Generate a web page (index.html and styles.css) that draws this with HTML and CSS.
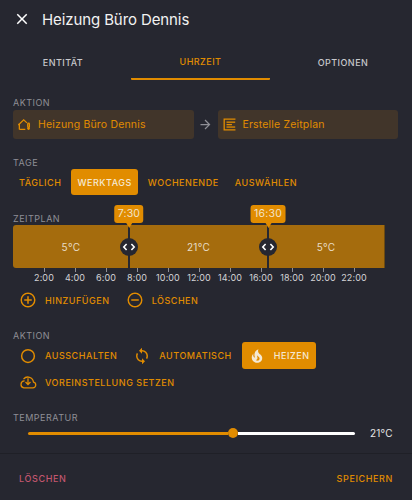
FILE: index.html
```html
<!DOCTYPE html>
<html lang="de">
<head>
    <meta charset="UTF-8">
    <meta name="viewport" content="width=device-width, initial-scale=1.0">
    <title>Heizung Büro Dennis</title>
    <link rel="stylesheet" href="styles.css">
</head>
<body>
    <div class="header">
        <svg class="close-icon" viewBox="0 0 24 24"><path d="M19,6.41L17.59,5L12,10.59L6.41,5L5,6.41L10.59,12L5,17.59L6.41,19L12,13.41L17.59,19L19,17.59L13.41,12L19,6.41Z"/></svg>
        <h1>Heizung Büro Dennis</h1>
    </div>

    <div class="tabs">
        <div class="tab tab-left">ENTITÄT</div>
        <div class="tab tab-active">UHRZEIT</div>
        <div class="tab tab-right">OPTIONEN</div>
    </div>

    <div class="content">
        <div class="label label-tight">AKTION</div>
        <div class="path-row">
            <div class="path-box">
                <svg class="icon-small" viewBox="0 0 24 24" fill="none" stroke="currentColor" stroke-width="2.4"><path d="M2.5 21V11L10.5 3.5L16.5 9M2.5 21H13.5"/><path d="M2.5 11L0.5 13"/><rect x="18" y="9.5" width="3" height="8" rx="1.5"/><circle cx="19.5" cy="19.5" r="2.5" fill="currentColor" stroke="none"/></svg>
                <span>Heizung Büro Dennis</span>
            </div>
            <svg class="path-arrow" viewBox="0 0 24 24"><path d="M4,11V13H16L10.5,18.5L11.92,19.92L19.84,12L11.92,4.08L10.5,5.5L16,11H4Z"/></svg>
            <div class="path-box">
                <svg class="icon-small" viewBox="0 0 24 24" fill="currentColor"><path d="M1 1H23V3.4H3.4V20.6H23V23H1Z"/><rect x="6.5" y="6.5" width="16" height="2.4"/><rect x="6.5" y="11" width="10" height="2.4"/><rect x="6.5" y="15.5" width="16" height="2.4"/></svg>
                <span>Erstelle Zeitplan</span>
            </div>
        </div>

        <div class="label">TAGE</div>
        <div class="btn-row">
            <div class="btn">TÄGLICH</div>
            <div class="btn btn-active">WERKTAGS</div>
            <div class="btn">WOCHENENDE</div>
            <div class="btn">AUSWÄHLEN</div>
        </div>

        <div class="label">ZEITPLAN</div>
        <div class="chart">
            <div class="slot slot-a">5°C</div>
            <div class="slot slot-b">21°C</div>
            <div class="slot slot-c">5°C</div>

            <div class="marker marker-a">
                <div class="tip">7:30</div>
                <div class="handle">
                    <svg viewBox="0 0 18 18" fill="none" stroke="#fff" stroke-width="1.6"><path d="M6.6 6L3.8 9L6.6 12M11.4 6L14.2 9L11.4 12"/></svg>
                </div>
            </div>
            <div class="marker marker-b">
                <div class="tip">16:30</div>
                <div class="handle">
                    <svg viewBox="0 0 18 18" fill="none" stroke="#fff" stroke-width="1.6"><path d="M6.6 6L3.8 9L6.6 12M11.4 6L14.2 9L11.4 12"/></svg>
                </div>
            </div>
        </div>
        <div class="ticks">
            <div class="tick">2:00</div>
            <div class="tick">4:00</div>
            <div class="tick">6:00</div>
            <div class="tick">8:00</div>
            <div class="tick">10:00</div>
            <div class="tick">12:00</div>
            <div class="tick">14:00</div>
            <div class="tick">16:00</div>
            <div class="tick">18:00</div>
            <div class="tick">20:00</div>
            <div class="tick">22:00</div>
        </div>

        <div class="btn-row btn-row-edit">
            <div class="btn btn-icon">
                <svg class="icon" viewBox="0 0 24 24" fill="currentColor"><path d="M12,20C7.59,20 4,16.41 4,12C4,7.59 7.59,4 12,4C16.41,4 20,7.59 20,12C20,16.41 16.41,20 12,20M12,2A10,10 0 0,0 2,12A10,10 0 0,0 12,22A10,10 0 0,0 22,12A10,10 0 0,0 12,2M13,7H11V11H7V13H11V17H13V13H17V11H13V7Z"/></svg>
                HINZUFÜGEN
            </div>
            <div class="btn btn-icon">
                <svg class="icon" viewBox="0 0 24 24" fill="currentColor"><path d="M12,20C7.59,20 4,16.41 4,12C4,7.59 7.59,4 12,4C16.41,4 20,7.59 20,12C20,16.41 16.41,20 12,20M12,2A10,10 0 0,0 2,12A10,10 0 0,0 12,22A10,10 0 0,0 22,12A10,10 0 0,0 12,2M7,13H17V11H7"/></svg>
                LÖSCHEN
            </div>
        </div>

        <div class="label label-tight">AKTION</div>
        <div class="btn-row btn-row-action">
            <div class="btn btn-icon">
                <svg class="icon" viewBox="0 0 24 24" fill="none" stroke="currentColor" stroke-width="2"><circle cx="12" cy="12" r="8.5"/></svg>
                AUSSCHALTEN
            </div>
            <div class="btn btn-icon">
                <svg class="icon" viewBox="0 0 24 24" fill="currentColor"><path d="M12,18A6,6 0 0,1 6,12C6,11 6.25,10.03 6.7,9.2L5.24,7.74C4.46,8.97 4,10.43 4,12A8,8 0 0,0 12,20V23L16,19L12,15M12,4V1L8,5L12,9V6A6,6 0 0,1 18,12C18,13 17.75,13.97 17.3,14.8L18.76,16.26C19.54,15.03 20,13.57 20,12A8,8 0 0,0 12,4Z"/></svg>
                AUTOMATISCH
            </div>
            <div class="btn btn-icon btn-active">
                <svg class="icon" viewBox="0 0 24 24" fill="currentColor"><path d="M17.66 11.2C17.43 10.9 17.15 10.64 16.89 10.38C16.22 9.78 15.46 9.35 14.82 8.72C13.33 7.26 13 4.85 13.95 3C13 3.23 12.17 3.75 11.46 4.32C8.87 6.4 7.85 10.07 9.07 13.22C9.11 13.32 9.15 13.42 9.15 13.55C9.15 13.77 9 13.97 8.8 14.05C8.57 14.15 8.33 14.09 8.14 13.93C8.08 13.88 8.04 13.83 8 13.76C6.87 12.33 6.69 10.28 7.45 8.64C5.78 10 4.87 12.3 5 14.47C5.06 14.97 5.12 15.47 5.29 15.97C5.43 16.57 5.7 17.17 6 17.7C7.08 19.43 8.95 20.67 10.96 20.92C13.1 21.19 15.39 20.8 17.03 19.32C18.86 17.66 19.5 15 18.56 12.72L18.43 12.46C18.28 12.13 17.66 11.2 17.66 11.2M14.5 17.5C14.22 17.74 13.76 18 13.4 18.1C12.28 18.5 11.16 17.94 10.5 17.28C11.69 17 12.4 16.12 12.61 15.23C12.78 14.43 12.46 13.77 12.33 13C12.21 12.26 12.23 11.63 12.5 10.94C12.69 11.32 12.89 11.7 13.13 12C13.9 13 15.11 13.44 15.37 14.8C15.41 14.94 15.43 15.08 15.43 15.23C15.46 16.05 15.1 16.95 14.5 17.5H14.5Z"/></svg>
                HEIZEN
            </div>
        </div>
        <div class="btn-row btn-row-preset">
            <div class="btn btn-icon">
                <svg class="icon" viewBox="0 0 24 24" fill="none" stroke="currentColor" stroke-width="1.7"><path d="M7.5 10.5H7A4.7 4.7 0 0 0 6.5 19.8H18.5A3.9 3.9 0 0 0 19.3 12.1A7.5 7.5 0 0 0 6 8.2"/><path d="M12 7V15M8.7 12L12 15.3L15.3 12"/></svg>
                VOREINSTELLUNG SETZEN
            </div>
        </div>

        <div class="label label-tight">TEMPERATUR</div>
        <div class="slider-row">
            <div class="slider">
                <div class="slider-fill"></div>
                <div class="slider-thumb"></div>
                <div class="slider-rest"></div>
            </div>
            <div class="slider-value">21°C</div>
        </div>
    </div>

    <div class="footer">
        <div class="footer-btn footer-delete">LÖSCHEN</div>
        <div class="footer-btn footer-save">SPEICHERN</div>
    </div>
</body>
</html>
```

FILE: styles.css
```css
body {
    font-family: Inter, "Liberation Sans", sans-serif;
    background-color: #262730;
    color: #fff;
    margin: 0;
    padding: 0;
    width: 412px;
    height: 500px;
    overflow: hidden;
}
.header {
    display: flex;
    align-items: center;
    height: 38px;
    padding-left: 13px;
}
.close-icon {
    width: 18px;
    height: 18px;
    fill: #fff;
}
h1 {
    margin: 0 0 0 11px;
    font-size: 15px;
    font-weight: 400;
    letter-spacing: -0.1px;
    color: #f2f2f2;
}
.tabs {
    display: grid;
    grid-template-columns: 131px 139px 142px;
    height: 42px;
}
.tab {
    display: flex;
    align-items: center;
    justify-content: center;
    padding-top: 6px;
    box-sizing: border-box;
    font-size: 9px;
    font-weight: 500;
    letter-spacing: 0.45px;
    color: #c8c8cc;
}
.tab-left {
    padding-right: 5px;
}
.tab-right {
    padding-left: 4px;
}
.tab-active {
    color: #e18c00;
    border-bottom: 2px solid #e18c00;
    border-radius: 1px;
}
.content {
    padding: 0 13px;
}
.label {
    height: 12px;
    line-height: 14px;
    margin-top: 17px;
    font-size: 9px;
    letter-spacing: 0.5px;
    color: #8f8f96;
}
.label-tight {
    margin-top: 16px;
}
.path-row {
    display: flex;
    align-items: center;
    margin-top: 2px;
}
.path-box {
    display: flex;
    align-items: center;
    gap: 7px;
    width: 180.5px;
    height: 29px;
    padding-left: 5px;
    box-sizing: border-box;
    background-color: #41352a;
    border-radius: 3px;
    color: #e18c00;
    font-size: 10.5px;
    letter-spacing: 0.17px;
}
.path-arrow {
    width: 15px;
    height: 15px;
    margin: 0 4.5px;
    fill: #8f8f96;
}
.icon {
    width: 18px;
    height: 18px;
    flex: none;
}
.icon-small {
    width: 13px;
    height: 13px;
    flex: none;
}
.btn-row {
    display: flex;
    gap: 4px;
    height: 26px;
    margin-top: 1px;
}
.btn-row-edit {
    margin-top: 3px;
}
.btn-row-action {
    height: 27px;
}
.btn-row-preset {
    margin-top: 0;
}
.btn {
    display: flex;
    align-items: center;
    padding: 0 6px;
    border-radius: 3px;
    color: #e18c00;
    font-size: 9px;
    font-weight: 500;
    letter-spacing: 0.53px;
}
.btn-icon {
    gap: 8px;
}
.btn-active {
    background-color: #e18c00;
    color: #f5e9d4;
}
.chart {
    position: relative;
    display: flex;
    width: 372px;
    height: 43px;
    margin-top: 1px;
    background-color: #a56c0d;
    border-radius: 3px 0 0 3px;
    border-right: 1px solid #6b4a12;
    box-sizing: border-box;
}
.slot {
    display: flex;
    align-items: center;
    justify-content: center;
    font-size: 10px;
    letter-spacing: 0.3px;
    color: #e8dcc6;
}
.slot-a, .slot-c {
    width: 31.25%;
}
.slot-b {
    width: 37.5%;
}
.marker {
    position: absolute;
    top: 0;
    bottom: 0;
    width: 2px;
    margin-left: -1px;
    background-color: #262730;
}
.marker-a {
    left: 31.25%;
}
.marker-b {
    left: 68.75%;
}
.tip {
    position: absolute;
    left: 50%;
    bottom: 45px;
    transform: translateX(-50%);
    padding: 0 3.5px;
    height: 18px;
    line-height: 18px;
    background-color: #e18c00;
    border-radius: 3px;
    color: #f2e3c8;
    font-size: 10.5px;
    letter-spacing: 0.2px;
    white-space: nowrap;
}
.tip::after {
    content: "";
    position: absolute;
    left: 50%;
    top: 100%;
    margin-left: -3px;
    border-left: 3px solid transparent;
    border-right: 3px solid transparent;
    border-top: 5px solid #e18c00;
}
.handle {
    position: absolute;
    left: -8px;
    top: 13px;
    width: 18px;
    height: 18px;
    border-radius: 50%;
    background-color: #262730;
}
.handle svg {
    display: block;
}
.ticks {
    display: flex;
    width: 372px;
    height: 16px;
    padding-left: 15.5px;
    box-sizing: border-box;
}
.tick {
    position: relative;
    width: 31px;
    padding-top: 4px;
    line-height: 12px;
    text-align: center;
    font-size: 9px;
    letter-spacing: 0.1px;
    color: #d4d4d6;
}
.tick::before {
    content: "";
    position: absolute;
    left: 15px;
    top: 0;
    width: 1px;
    height: 4px;
    background-color: #8f8f96;
}
.slider-row {
    display: flex;
    align-items: center;
    height: 20px;
    padding-left: 15px;
}
.slider {
    display: flex;
    align-items: center;
    width: 327px;
    height: 3px;
}
.slider-fill {
    width: 200px;
    height: 3px;
    background-color: #e18c00;
    border-radius: 2px 0 0 2px;
}
.slider-thumb {
    flex: none;
    width: 10px;
    height: 10px;
    border-radius: 50%;
    background-color: #e18c00;
}
.slider-rest {
    flex: 1;
    height: 3px;
    background-color: #fff;
    border-radius: 0 2px 2px 0;
}
.slider-value {
    margin-left: 15px;
    font-size: 10px;
    letter-spacing: 0.2px;
    color: #e6e6e6;
}
.footer {
    display: flex;
    justify-content: space-between;
    align-items: center;
    margin-top: 10px;
    height: 47px;
    padding: 2px 19px 0;
    box-sizing: border-box;
    border-top: 1px solid #1f2027;
}
.footer-btn {
    font-size: 9px;
    font-weight: 500;
    letter-spacing: 0.62px;
}
.footer-delete {
    color: #c2566f;
}
.footer-save {
    color: #e18c00;
}
```
